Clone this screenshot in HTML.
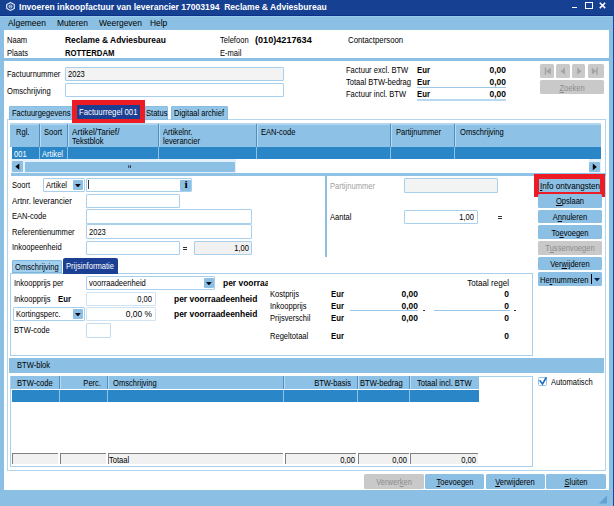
<!DOCTYPE html>
<html lang="nl"><head><meta charset="utf-8"><title>Invoeren inkoopfactuur</title><style>
html,body{margin:0;padding:0;background:#8bbfe3;}
#w{position:relative;width:614px;height:506px;overflow:hidden;font-family:"Liberation Sans",sans-serif;font-size:8.6px;color:#000;}
#w div,#w span,#w svg{position:absolute;}
#w span span{position:absolute;}
.t{white-space:nowrap;}
.tt{font-size:8.9px;}
.m{font-size:9.3px;}
u{text-decoration:underline;text-decoration-thickness:0.6px;text-underline-offset:0.5px;}
</style></head><body><div id="w">
<div style="left:0px;top:0px;width:614px;height:506px;background:#8bbfe3;"></div>
<div style="left:0px;top:0px;width:614px;height:15.5px;background:#164193;"></div>
<div style="left:0px;top:14.7px;width:614px;height:0.9px;background:#0d3289;"></div>
<div style="left:0px;top:15.6px;width:612.8px;height:1.8px;background:#99cbea;"></div>
<svg style="left:5.6px;top:1.7px" width="9" height="9" viewBox="0 0 10 10"><path d="M5 .6L9.2 2.9V7.1L5 9.4L.8 7.1V2.9Z" fill="none" stroke="#e6ecf8" stroke-width="1.25"/><circle cx="5" cy="5" r="1.7" fill="none" stroke="#e6ecf8" stroke-width=".9"/><path d="M3.6 5H6.4" stroke="#e6ecf8" stroke-width=".7"/></svg>
<span class="t tt" style="top:0.7999999999999998px;line-height:12px;left:18.5px;color:#fff;font-weight:bold;transform:scaleX(0.965);transform-origin:left center;">Invoeren inkoopfactuur van leverancier 17003194&nbsp; Reclame &amp; Adviesbureau</span>
<div style="left:572.3px;top:6.9px;width:5.2px;height:1.6px;background:#fff;"></div>
<div style="left:584.8px;top:2.2px;width:8.6px;height:6.6px;border:1.2px solid #fff;border-top-width:1.8px;box-sizing:border-box;"></div>
<svg style="left:599.4px;top:2.1px" width="7" height="6.8" viewBox="0 0 8 8"><path d="M.8 .8L7.2 7.2M7.2 .8L.8 7.2" stroke="#fff" stroke-width="1.7"/></svg>
<div style="left:612.8px;top:14.8px;width:1.2px;height:491.2px;background:#1f4598;"></div>
<span class="t m" style="top:17.1px;line-height:12px;left:8px;transform:scaleX(0.905);transform-origin:left center;">Algemeen</span>
<span class="t m" style="top:17.1px;line-height:12px;left:56.5px;transform:scaleX(0.905);transform-origin:left center;">Muteren</span>
<span class="t m" style="top:17.1px;line-height:12px;left:98.5px;transform:scaleX(0.905);transform-origin:left center;">Weergeven</span>
<span class="t m" style="top:17.1px;line-height:12px;left:150px;transform:scaleX(0.905);transform-origin:left center;">Help</span>
<div style="left:3.8px;top:30.4px;width:605.2px;height:28.1px;background:#fff;"></div>
<div style="left:3.8px;top:61.3px;width:605.2px;height:429.2px;background:#fff;"></div>
<span class="t" style="top:34.0px;line-height:12px;left:7px;transform:scaleX(0.88);transform-origin:left center;">Naam</span>
<span class="t" style="top:47.0px;line-height:12px;left:7px;transform:scaleX(0.88);transform-origin:left center;">Plaats</span>
<span class="t" style="top:34.0px;line-height:12px;left:65px;font-weight:bold;transform:scaleX(0.98);transform-origin:left center;">Reclame &amp; Adviesbureau</span>
<span class="t" style="top:47.0px;line-height:12px;left:65px;font-weight:bold;transform:scaleX(0.9);transform-origin:left center;">ROTTERDAM</span>
<span class="t" style="top:34.0px;line-height:12px;left:220px;transform:scaleX(0.88);transform-origin:left center;">Telefoon</span>
<span class="t" style="top:34.0px;line-height:12px;left:255px;font-weight:bold;transform:scaleX(1.06);transform-origin:left center;">(010)4217634</span>
<span class="t" style="top:47.0px;line-height:12px;left:220px;transform:scaleX(0.88);transform-origin:left center;">E-mail</span>
<span class="t" style="top:34.0px;line-height:12px;left:348px;transform:scaleX(0.91);transform-origin:left center;">Contactpersoon</span>
<span class="t" style="top:67.8px;line-height:12px;left:7px;transform:scaleX(0.88);transform-origin:left center;">Factuurnummer</span>
<span class="t" style="top:84.5px;line-height:12px;left:7px;transform:scaleX(0.88);transform-origin:left center;">Omschrijving</span>
<div style="left:64.5px;top:66.5px;width:219.0px;height:14.0px;background:#f3f3f3;border-radius:1.5px;box-shadow:inset 0 0 0 1px #a8cfeb;"></div>
<span class="t" style="top:67.8px;line-height:12px;left:68px;transform:scaleX(0.88);transform-origin:left center;">2023</span>
<div style="left:64.5px;top:82.5px;width:219.0px;height:14.0px;background:#fff;border-radius:1.5px;box-shadow:inset 0 0 0 1px #a8cfeb;"></div>
<span class="t" style="top:63.599999999999994px;line-height:12px;left:346px;transform:scaleX(0.88);transform-origin:left center;">Factuur excl. BTW</span>
<span class="t" style="top:63.599999999999994px;line-height:12px;left:417.3px;font-weight:bold;transform:scaleX(0.9);transform-origin:left center;">Eur</span>
<span class="t" style="top:63.599999999999994px;line-height:12px;left:206px;width:300px;text-align:right;font-weight:bold;transform:scaleX(0.98);transform-origin:right center;">0,00</span>
<span class="t" style="top:75.6px;line-height:12px;left:346px;transform:scaleX(0.88);transform-origin:left center;">Totaal BTW-bedrag</span>
<span class="t" style="top:75.6px;line-height:12px;left:417.3px;font-weight:bold;transform:scaleX(0.9);transform-origin:left center;">Eur</span>
<span class="t" style="top:75.6px;line-height:12px;left:206px;width:300px;text-align:right;font-weight:bold;transform:scaleX(0.98);transform-origin:right center;">0,00</span>
<span class="t" style="top:87.5px;line-height:12px;left:346px;transform:scaleX(0.88);transform-origin:left center;">Factuur incl. BTW</span>
<span class="t" style="top:87.5px;line-height:12px;left:417.3px;font-weight:bold;transform:scaleX(0.9);transform-origin:left center;">Eur</span>
<span class="t" style="top:87.5px;line-height:12px;left:206px;width:300px;text-align:right;font-weight:bold;transform:scaleX(0.98);transform-origin:right center;">0,00</span>
<div style="left:417px;top:86.7px;width:89px;height:0.8px;background:#9cc8e8;"></div>
<div style="left:417px;top:98.8px;width:89px;height:2px;background:#b7d8f0;"></div>
<div style="left:540.3px;top:64px;width:13.5px;height:13.7px;background:#c9c9c9;border-radius:1.5px;"></div>
<div style="left:556.2px;top:64px;width:13.5px;height:13.7px;background:#c9c9c9;border-radius:1.5px;"></div>
<div style="left:571.9px;top:64px;width:13.5px;height:13.7px;background:#c9c9c9;border-radius:1.5px;"></div>
<div style="left:587.5px;top:64px;width:16.2px;height:13.7px;background:#c9c9c9;border-radius:1.5px;"></div>
<svg style="left:0;top:0" width="614" height="100" viewBox="0 0 614 100"><path d="M550.7 67.60000000000001L546.3 71.2L550.7 74.8Z" fill="#a3a3a3"/><rect x="544.8" y="67.6" width="1.5" height="7.2" fill="#a3a3a3"/><path d="M565.0 67.60000000000001L560.5999999999999 71.2L565.0 74.8Z" fill="#a3a3a3"/><path d="M577.1999999999999 67.60000000000001L581.6 71.2L577.1999999999999 74.8Z" fill="#a3a3a3"/><path d="M591.8 67.60000000000001L596.2 71.2L591.8 74.8Z" fill="#a3a3a3"/><rect x="596.2" y="67.6" width="1.5" height="7.2" fill="#a3a3a3"/></svg>
<div style="left:540.3px;top:80.2px;width:63.60000000000002px;height:13.599999999999994px;background:#c9c9c9;border-radius:1.5px;"></div>
<span class="t" style="top:81.6px;line-height:12px;left:422.0999999999999px;width:300px;text-align:center;color:#8c8c8c;transform:scaleX(0.88);transform-origin:center center;"><u>Z</u>oeken</span>
<div style="left:7px;top:119.3px;width:599.2px;height:351.3px;border:1.2px solid #b3d5ee;box-sizing:border-box;"></div>
<div style="left:8.8px;top:106px;width:64.2px;height:13.599999999999994px;background:#93c5e8;border-radius:2px 2px 0 0;box-shadow:inset 0 0 0 0.8px #86badf;"></div>
<span class="t" style="top:107.1px;line-height:12px;left:12px;transform:scaleX(0.88);transform-origin:left center;">Factuurgegevens</span>
<div style="left:142px;top:106px;width:26px;height:13.599999999999994px;background:#93c5e8;border-radius:2px 2px 0 0;box-shadow:inset 0 0 0 0.8px #86badf;"></div>
<span class="t" style="top:107.1px;line-height:12px;left:145.5px;transform:scaleX(0.88);transform-origin:left center;">Status</span>
<div style="left:170.5px;top:106px;width:57.0px;height:13.599999999999994px;background:#93c5e8;border-radius:2px 2px 0 0;box-shadow:inset 0 0 0 0.8px #86badf;"></div>
<span class="t" style="top:107.1px;line-height:12px;left:173.5px;transform:scaleX(0.88);transform-origin:left center;">Digitaal archief</span>
<div style="left:72px;top:100px;width:73px;height:23.5px;background:#ed1c24;"></div>
<div style="left:77.2px;top:105px;width:62.6px;height:13.7px;background:#1b3f92;"></div>
<span class="t" style="top:106.1px;line-height:12px;left:79px;color:#fff;transform:scaleX(0.9);transform-origin:left center;">Factuurregel 001</span>
<div style="left:10.3px;top:123px;width:590.7px;height:24px;background:#8dc1e5;"></div>
<div style="left:10.3px;top:123px;width:590.7px;height:1.8px;background:#b3d6ef;"></div>
<div style="left:39.0px;top:124px;width:1px;height:23px;background:#4f8fc4;"></div>
<div style="left:40.0px;top:124px;width:0.6px;height:23px;background:#b9daf1;"></div>
<div style="left:67.0px;top:124px;width:1px;height:23px;background:#4f8fc4;"></div>
<div style="left:68.0px;top:124px;width:0.6px;height:23px;background:#b9daf1;"></div>
<div style="left:157.5px;top:124px;width:1px;height:23px;background:#4f8fc4;"></div>
<div style="left:158.5px;top:124px;width:0.6px;height:23px;background:#b9daf1;"></div>
<div style="left:255.5px;top:124px;width:1px;height:23px;background:#4f8fc4;"></div>
<div style="left:256.5px;top:124px;width:0.6px;height:23px;background:#b9daf1;"></div>
<div style="left:390.0px;top:124px;width:1px;height:23px;background:#4f8fc4;"></div>
<div style="left:391.0px;top:124px;width:0.6px;height:23px;background:#b9daf1;"></div>
<div style="left:454.0px;top:124px;width:1px;height:23px;background:#4f8fc4;"></div>
<div style="left:455.0px;top:124px;width:0.6px;height:23px;background:#b9daf1;"></div>
<span class="t" style="top:126.0px;line-height:12px;left:16px;transform:scaleX(0.88);transform-origin:left center;">Rgl.</span>
<span class="t" style="top:126.0px;line-height:12px;left:44px;transform:scaleX(0.88);transform-origin:left center;">Soort</span>
<span class="t" style="top:126.0px;line-height:12px;left:72px;transform:scaleX(0.955);transform-origin:left center;">Artikel/Tarief/</span>
<span class="t" style="top:135.0px;line-height:12px;left:72px;transform:scaleX(0.88);transform-origin:left center;">Tekstblok</span>
<span class="t" style="top:126.0px;line-height:12px;left:163px;transform:scaleX(0.88);transform-origin:left center;">Artikelnr.</span>
<span class="t" style="top:135.0px;line-height:12px;left:163px;transform:scaleX(0.88);transform-origin:left center;">leverancier</span>
<span class="t" style="top:126.0px;line-height:12px;left:261px;transform:scaleX(0.88);transform-origin:left center;">EAN-code</span>
<span class="t" style="top:126.0px;line-height:12px;left:395.5px;transform:scaleX(0.88);transform-origin:left center;">Partijnummer</span>
<span class="t" style="top:126.0px;line-height:12px;left:460px;transform:scaleX(0.88);transform-origin:left center;">Omschrijving</span>
<div style="left:11.5px;top:147px;width:589.3px;height:12.2px;background:#2a86c6;"></div>
<div style="left:39.2px;top:147px;width:0.8px;height:12.2px;background:#8cc0e4;"></div>
<div style="left:67.2px;top:147px;width:0.8px;height:12.2px;background:#8cc0e4;"></div>
<div style="left:157.7px;top:147px;width:0.8px;height:12.2px;background:#8cc0e4;"></div>
<div style="left:255.7px;top:147px;width:0.8px;height:12.2px;background:#8cc0e4;"></div>
<div style="left:390.2px;top:147px;width:0.8px;height:12.2px;background:#8cc0e4;"></div>
<div style="left:454.2px;top:147px;width:0.8px;height:12.2px;background:#8cc0e4;"></div>
<span class="t" style="top:147.9px;line-height:12px;left:13.5px;color:#fff;transform:scaleX(0.88);transform-origin:left center;">001</span>
<span class="t" style="top:147.9px;line-height:12px;left:41.5px;color:#fff;transform:scaleX(0.88);transform-origin:left center;">Artikel</span>
<div style="left:10.5px;top:159.3px;width:590.5px;height:14.2px;background:#e4f0f9;"></div>
<div style="left:12.2px;top:161.2px;width:10.8px;height:10.8px;background:#8bbfe3;border-radius:1px;"></div>
<div style="left:25px;top:161.5px;width:210px;height:10.3px;background:#8bbfe3;border-radius:1px;"></div>
<div style="left:235.5px;top:159.3px;width:353px;height:14.2px;background:#fff;"></div>
<div style="left:589.2px;top:162.2px;width:10.8px;height:9.5px;background:#8bbfe3;border-radius:1px;"></div>
<svg style="left:0;top:150px" width="614" height="30" viewBox="0 150 614 30"><path d="M19.3 163.5L15.3 166.6L19.3 169.7Z" fill="#000"/><path d="M592.8 163.6L596.8 166.9L592.8 170.2Z" fill="#000"/><rect x="128.3" y="165.3" width="0.9" height="2.6" fill="#223"/><rect x="130" y="165.3" width="0.9" height="2.6" fill="#223"/></svg>
<div style="left:10.5px;top:173.3px;width:595px;height:2.7px;background:#8fc2e5;"></div>
<span class="t" style="top:179.0px;line-height:12px;left:12px;transform:scaleX(0.88);transform-origin:left center;">Soort</span>
<div style="left:43px;top:178px;width:41.5px;height:14px;background:#fff;border-radius:1.5px;box-shadow:inset 0 0 0 1px #a8cfeb;"></div>
<span class="t" style="top:179.2px;line-height:12px;left:46.3px;transform:scaleX(0.88);transform-origin:left center;">Artikel</span>
<div style="left:73px;top:180px;width:10px;height:10px;background:#8bbfe3;border-radius:1px;"></div>
<svg style="left:75.1px;top:183.6px" width="5.8" height="3.8" viewBox="0 0 6 4"><path d="M0 0H6L3 3.8Z" fill="#0a0a18"/></svg>
<div style="left:86px;top:178px;width:106.30000000000001px;height:14px;background:#fff;border-radius:1.5px;box-shadow:inset 0 0 0 1px #a8cfeb;"></div>
<div style="left:88.3px;top:180.4px;width:1.2px;height:8.8px;background:#3a3a3a;"></div>
<div style="left:180px;top:180px;width:11.2px;height:10.5px;background:#8bbfe3;border-radius:1px;"></div>
<span class="t" style="top:179.0px;line-height:12px;left:35.599999999999994px;width:300px;text-align:center;font-weight:bold;transform:scaleX(1.1);transform-origin:center center;font-family:'Liberation Serif',serif;font-size:10.5px;">i</span>
<span class="t" style="top:194.9px;line-height:12px;left:12px;transform:scaleX(0.92);transform-origin:left center;">Artnr. leverancier</span>
<div style="left:86px;top:193.7px;width:93.5px;height:14.300000000000011px;background:#fff;border-radius:1.5px;box-shadow:inset 0 0 0 1px #a8cfeb;"></div>
<span class="t" style="top:210.0px;line-height:12px;left:12px;transform:scaleX(0.88);transform-origin:left center;">EAN-code</span>
<div style="left:86px;top:209px;width:166.3px;height:14.599999999999994px;background:#fff;border-radius:1.5px;box-shadow:inset 0 0 0 1px #a8cfeb;"></div>
<span class="t" style="top:225.9px;line-height:12px;left:12px;transform:scaleX(0.88);transform-origin:left center;">Referentienummer</span>
<div style="left:86px;top:224.3px;width:166.3px;height:15.199999999999989px;background:#fff;border-radius:1.5px;box-shadow:inset 0 0 0 1px #a8cfeb;"></div>
<span class="t" style="top:226.0px;line-height:12px;left:89px;transform:scaleX(0.88);transform-origin:left center;">2023</span>
<span class="t" style="top:241.3px;line-height:12px;left:12px;transform:scaleX(0.88);transform-origin:left center;">Inkoopeenheid</span>
<div style="left:86px;top:240.8px;width:93.5px;height:14.399999999999977px;background:#fff;border-radius:1.5px;box-shadow:inset 0 0 0 1px #a8cfeb;"></div>
<div style="left:183px;top:246.6px;width:4.4px;height:1px;background:#333;"></div>
<div style="left:183px;top:248.5px;width:4.4px;height:1px;background:#333;"></div>
<div style="left:194px;top:240.8px;width:58.30000000000001px;height:14.399999999999977px;background:#f1f1f1;border-radius:1.5px;box-shadow:inset 0 0 0 1px #a8cfeb;"></div>
<span class="t" style="top:241.6px;line-height:12px;left:-50.69999999999999px;width:300px;text-align:right;transform:scaleX(0.88);transform-origin:right center;">1,00</span>
<div style="left:324.8px;top:175px;width:2.6px;height:82px;background:#8bbfe3;"></div>
<span class="t" style="top:179.8px;line-height:12px;left:330px;color:#a0a0a0;transform:scaleX(0.88);transform-origin:left center;">Partijnummer</span>
<div style="left:404px;top:178.1px;width:94.30000000000001px;height:14.5px;background:#f2f3f3;border-radius:1.5px;box-shadow:inset 0 0 0 1px #a8cfeb;"></div>
<span class="t" style="top:210.8px;line-height:12px;left:330px;transform:scaleX(0.88);transform-origin:left center;">Aantal</span>
<div style="left:404px;top:209.5px;width:73.5px;height:14.800000000000011px;background:#fff;border-radius:1.5px;box-shadow:inset 0 0 0 1px #a8cfeb;"></div>
<span class="t" style="top:210.8px;line-height:12px;left:174.10000000000002px;width:300px;text-align:right;transform:scaleX(0.88);transform-origin:right center;">1,00</span>
<div style="left:497.8px;top:215.7px;width:4.4px;height:1px;background:#333;"></div>
<div style="left:497.8px;top:217.6px;width:4.4px;height:1px;background:#333;"></div>
<div style="left:534px;top:174.1px;width:70.8px;height:22.6px;background:#ed1c24;"></div>
<div style="left:538.7px;top:179.1px;width:61.4px;height:12.7px;background:#8bbfe3;"></div>
<span class="t" style="top:179.5px;line-height:12px;left:539.5px;transform:scaleX(0.945);transform-origin:left center;"><u>I</u>nfo ontvangsten</span>
<div style="left:537.5px;top:193.95000000000002px;width:64.0px;height:13.699999999999989px;background:#8bbfe3;border-radius:1.5px;"></div>
<span class="t" style="top:195.4px;line-height:12px;left:419.5px;width:300px;text-align:center;transform:scaleX(0.88);transform-origin:center center;"><u>O</u>pslaan</span>
<div style="left:537.5px;top:209.60000000000002px;width:64.0px;height:13.699999999999989px;background:#8bbfe3;border-radius:1.5px;"></div>
<span class="t" style="top:211.05px;line-height:12px;left:419.5px;width:300px;text-align:center;transform:scaleX(0.88);transform-origin:center center;">A<u>n</u>nuleren</span>
<div style="left:537.5px;top:225.25px;width:64.0px;height:13.699999999999989px;background:#8bbfe3;border-radius:1.5px;"></div>
<span class="t" style="top:226.7px;line-height:12px;left:419.5px;width:300px;text-align:center;transform:scaleX(0.88);transform-origin:center center;">To<u>e</u>voegen</span>
<div style="left:537.5px;top:240.9px;width:64.0px;height:13.699999999999989px;background:#c9c9c9;border-radius:1.5px;"></div>
<span class="t" style="top:242.35px;line-height:12px;left:419.5px;width:300px;text-align:center;color:#8c8c8c;transform:scaleX(0.88);transform-origin:center center;">T<u>u</u>ssenvoegen</span>
<div style="left:537.5px;top:256.55px;width:64.0px;height:13.699999999999989px;background:#8bbfe3;border-radius:1.5px;"></div>
<span class="t" style="top:258.0px;line-height:12px;left:419.5px;width:300px;text-align:center;transform:scaleX(0.88);transform-origin:center center;">Ver<u>w</u>ijderen</span>
<div style="left:537.5px;top:272.20000000000005px;width:64px;height:13.7px;background:#8bbfe3;border-radius:1.5px;"></div>
<span class="t" style="top:273.6px;line-height:12px;left:540px;transform:scaleX(0.88);transform-origin:left center;">He<u>r</u>nummeren</span>
<div style="left:590.8px;top:274.20000000000005px;width:0.9px;height:10px;background:#000;"></div>
<svg style="left:594px;top:277.50000000000006px" width="6" height="4" viewBox="0 0 6 4"><path d="M0 0H6L3 3.6Z" fill="#10204a"/></svg>
<div style="left:10.3px;top:273px;width:522.8px;height:82.7px;border:1px solid #a8cfeb;box-sizing:border-box;"></div>
<div style="left:12px;top:260px;width:49.5px;height:13.3px;background:#a3cfee;border-radius:2px 2px 0 0;box-shadow:inset 0 0 0 1px #7fb6de;"></div>
<span class="t" style="top:261.0px;line-height:12px;left:15px;transform:scaleX(0.88);transform-origin:left center;">Omschrijving</span>
<div style="left:63px;top:258px;width:54.5px;height:15.5px;background:#1b3f92;border-radius:2px 2px 0 0;"></div>
<span class="t" style="top:260.3px;line-height:12px;left:65.5px;color:#fff;transform:scaleX(0.88);transform-origin:left center;">Prijsinformatie</span>
<span class="t" style="top:277.0px;line-height:12px;left:14px;transform:scaleX(0.88);transform-origin:left center;">Inkoopprijs per</span>
<div style="left:86px;top:276px;width:129px;height:14px;background:#fff;border-radius:1.5px;box-shadow:inset 0 0 0 1px #a8cfeb;"></div>
<span class="t" style="top:277.0px;line-height:12px;left:89px;transform:scaleX(0.88);transform-origin:left center;">voorraadeenheid</span>
<div style="left:204px;top:277.7px;width:10px;height:10.800000000000011px;background:#8bbfe3;border-radius:1px;"></div>
<svg style="left:206.1px;top:281.70000000000005px" width="5.8" height="3.8" viewBox="0 0 6 4"><path d="M0 0H6L3 3.8Z" fill="#0a0a18"/></svg>
<div style="left:222px;top:277px;width:46px;height:12px;overflow:hidden;"><span class="t" style="left:1px;top:0;line-height:12px;font-weight:bold;transform:scaleX(0.98);transform-origin:left center;">per voorraadeenheid</span></div>
<span class="t" style="top:292.5px;line-height:12px;left:14px;transform:scaleX(0.88);transform-origin:left center;">Inkoopprijs</span>
<span class="t" style="top:292.8px;line-height:12px;left:57.5px;font-weight:bold;transform:scaleX(0.9);transform-origin:left center;">Eur</span>
<div style="left:86px;top:292.3px;width:70px;height:13.399999999999977px;background:#fff;border-radius:1.5px;box-shadow:inset 0 0 0 1px #cfe3f3;"></div>
<span class="t" style="top:292.7px;line-height:12px;left:-148px;width:300px;text-align:right;transform:scaleX(0.88);transform-origin:right center;">0,00</span>
<span class="t" style="top:292.5px;line-height:12px;left:174px;font-weight:bold;transform:scaleX(0.98);transform-origin:left center;">per voorraadeenheid</span>
<div style="left:13px;top:307px;width:71.5px;height:14px;background:#fff;border-radius:1.5px;box-shadow:inset 0 0 0 1px #a8cfeb;"></div>
<span class="t" style="top:308.2px;line-height:12px;left:16px;transform:scaleX(0.88);transform-origin:left center;">Kortingsperc.</span>
<div style="left:73px;top:309px;width:10px;height:10px;background:#8bbfe3;border-radius:1px;"></div>
<svg style="left:75.1px;top:312.6px" width="5.8" height="3.8" viewBox="0 0 6 4"><path d="M0 0H6L3 3.8Z" fill="#0a0a18"/></svg>
<div style="left:86px;top:307px;width:70px;height:13.5px;background:#fff;border-radius:1.5px;box-shadow:inset 0 0 0 1px #cfe3f3;"></div>
<span class="t" style="top:308.2px;line-height:12px;left:-148px;width:300px;text-align:right;transform:scaleX(0.98);transform-origin:right center;">0,00 %</span>
<span class="t" style="top:308.2px;line-height:12px;left:174px;font-weight:bold;transform:scaleX(0.98);transform-origin:left center;">per voorraadeenheid</span>
<span class="t" style="top:324.2px;line-height:12px;left:14px;transform:scaleX(0.88);transform-origin:left center;">BTW-code</span>
<div style="left:86px;top:323px;width:25px;height:14.5px;background:#fff;border-radius:1.5px;box-shadow:inset 0 0 0 1px #c3dcf0;"></div>
<span class="t" style="top:288.0px;line-height:12px;left:269.7px;transform:scaleX(0.88);transform-origin:left center;">Kostprijs</span>
<span class="t" style="top:288.0px;line-height:12px;left:331.2px;font-weight:bold;transform:scaleX(0.9);transform-origin:left center;">Eur</span>
<span class="t" style="top:288.0px;line-height:12px;left:209px;width:300px;text-align:right;font-weight:bold;transform:scaleX(0.98);transform-origin:right center;">0</span>
<span class="t" style="top:300.0px;line-height:12px;left:269.7px;transform:scaleX(0.88);transform-origin:left center;">Inkoopprijs</span>
<span class="t" style="top:300.0px;line-height:12px;left:331.2px;font-weight:bold;transform:scaleX(0.9);transform-origin:left center;">Eur</span>
<span class="t" style="top:300.0px;line-height:12px;left:209px;width:300px;text-align:right;font-weight:bold;transform:scaleX(0.98);transform-origin:right center;">0</span>
<span class="t" style="top:312.2px;line-height:12px;left:269.7px;transform:scaleX(0.88);transform-origin:left center;">Prijsverschil</span>
<span class="t" style="top:312.2px;line-height:12px;left:331.2px;font-weight:bold;transform:scaleX(0.9);transform-origin:left center;">Eur</span>
<span class="t" style="top:312.2px;line-height:12px;left:209px;width:300px;text-align:right;font-weight:bold;transform:scaleX(0.98);transform-origin:right center;">0</span>
<span class="t" style="top:330.0px;line-height:12px;left:269.7px;transform:scaleX(0.88);transform-origin:left center;">Regeltotaal</span>
<span class="t" style="top:330.0px;line-height:12px;left:331.2px;font-weight:bold;transform:scaleX(0.9);transform-origin:left center;">Eur</span>
<span class="t" style="top:330.0px;line-height:12px;left:209px;width:300px;text-align:right;font-weight:bold;transform:scaleX(0.98);transform-origin:right center;">0</span>
<span class="t" style="top:288.0px;line-height:12px;left:117.60000000000002px;width:300px;text-align:right;font-weight:bold;transform:scaleX(0.98);transform-origin:right center;">0,00</span>
<span class="t" style="top:300.0px;line-height:12px;left:117.60000000000002px;width:300px;text-align:right;font-weight:bold;transform:scaleX(0.98);transform-origin:right center;">0,00</span>
<span class="t" style="top:312.2px;line-height:12px;left:117.60000000000002px;width:300px;text-align:right;font-weight:bold;transform:scaleX(0.98);transform-origin:right center;">0,00</span>
<span class="t" style="top:277.0px;line-height:12px;left:209px;width:300px;text-align:right;transform:scaleX(0.94);transform-origin:right center;">Totaal regel</span>
<div style="left:349.5px;top:309.8px;width:68.5px;height:0.8px;background:#9cc8e8;"></div>
<div style="left:433.5px;top:309.8px;width:76px;height:0.8px;background:#9cc8e8;"></div>
<div style="left:422.5px;top:310.3px;width:2px;height:1px;background:#333;"></div>
<div style="left:514px;top:310.3px;width:2px;height:1px;background:#333;"></div>
<div style="left:9.3px;top:358px;width:595px;height:15.2px;background:#8bbfe3;"></div>
<span class="t" style="top:359.3px;line-height:12px;left:16.8px;transform:scaleX(0.88);transform-origin:left center;">BTW-blok</span>
<div style="left:10.3px;top:375.6px;width:522.7px;height:91px;border:1px solid #a8cfeb;box-sizing:border-box;"></div>
<div style="left:11.3px;top:375.8px;width:467.3px;height:13.7px;background:#8dc1e5;"></div>
<div style="left:58.5px;top:376.3px;width:1px;height:13.2px;background:#4f8fc4;"></div>
<div style="left:59.5px;top:376.3px;width:0.6px;height:13.2px;background:#b9daf1;"></div>
<div style="left:106.5px;top:376.3px;width:1px;height:13.2px;background:#4f8fc4;"></div>
<div style="left:107.5px;top:376.3px;width:0.6px;height:13.2px;background:#b9daf1;"></div>
<div style="left:283.2px;top:376.3px;width:1px;height:13.2px;background:#4f8fc4;"></div>
<div style="left:284.2px;top:376.3px;width:0.6px;height:13.2px;background:#b9daf1;"></div>
<div style="left:356.7px;top:376.3px;width:1px;height:13.2px;background:#4f8fc4;"></div>
<div style="left:357.7px;top:376.3px;width:0.6px;height:13.2px;background:#b9daf1;"></div>
<div style="left:408.8px;top:376.3px;width:1px;height:13.2px;background:#4f8fc4;"></div>
<div style="left:409.8px;top:376.3px;width:0.6px;height:13.2px;background:#b9daf1;"></div>
<span class="t" style="top:376.6px;line-height:12px;left:17px;transform:scaleX(0.88);transform-origin:left center;">BTW-code</span>
<span class="t" style="top:376.6px;line-height:12px;left:-199.5px;width:300px;text-align:right;transform:scaleX(0.88);transform-origin:right center;">Perc.</span>
<span class="t" style="top:376.6px;line-height:12px;left:113px;transform:scaleX(0.88);transform-origin:left center;">Omschrijving</span>
<span class="t" style="top:376.6px;line-height:12px;left:50.5px;width:300px;text-align:right;transform:scaleX(0.88);transform-origin:right center;">BTW-basis</span>
<span class="t" style="top:376.6px;line-height:12px;left:360px;transform:scaleX(0.88);transform-origin:left center;">BTW-bedrag</span>
<span class="t" style="top:376.6px;line-height:12px;left:417px;transform:scaleX(0.88);transform-origin:left center;">Totaal incl. BTW</span>
<div style="left:11.8px;top:389.5px;width:466.8px;height:12.1px;background:#2a86c6;"></div>
<div style="left:58.7px;top:389.5px;width:0.8px;height:12.1px;background:#8cc0e4;"></div>
<div style="left:106.7px;top:389.5px;width:0.8px;height:12.1px;background:#8cc0e4;"></div>
<div style="left:283.4px;top:389.5px;width:0.8px;height:12.1px;background:#8cc0e4;"></div>
<div style="left:356.9px;top:389.5px;width:0.8px;height:12.1px;background:#8cc0e4;"></div>
<div style="left:409.0px;top:389.5px;width:0.8px;height:12.1px;background:#8cc0e4;"></div>
<div style="left:12px;top:452.8px;width:46.3px;height:11.2px;background:#f1f1f1;border-top:1.5px solid #7f7f7f;border-left:1.5px solid #7f7f7f;box-sizing:border-box;"></div>
<div style="left:60px;top:452.8px;width:46.3px;height:11.2px;background:#f1f1f1;border-top:1.5px solid #7f7f7f;border-left:1.5px solid #7f7f7f;box-sizing:border-box;"></div>
<div style="left:108px;top:452.8px;width:175px;height:11.2px;background:#f1f1f1;border-top:1.5px solid #7f7f7f;border-left:1.5px solid #7f7f7f;box-sizing:border-box;"></div>
<div style="left:284.7px;top:452.8px;width:71.80000000000001px;height:11.2px;background:#f1f1f1;border-top:1.5px solid #7f7f7f;border-left:1.5px solid #7f7f7f;box-sizing:border-box;"></div>
<div style="left:358.2px;top:452.8px;width:50.400000000000034px;height:11.2px;background:#f1f1f1;border-top:1.5px solid #7f7f7f;border-left:1.5px solid #7f7f7f;box-sizing:border-box;"></div>
<div style="left:410.3px;top:452.8px;width:68.19999999999999px;height:11.2px;background:#f1f1f1;border-top:1.5px solid #7f7f7f;border-left:1.5px solid #7f7f7f;box-sizing:border-box;"></div>
<span class="t" style="top:453.5px;line-height:12px;left:109px;transform:scaleX(0.88);transform-origin:left center;">Totaal</span>
<span class="t" style="top:453.6px;line-height:12px;left:54.60000000000002px;width:300px;text-align:right;transform:scaleX(0.88);transform-origin:right center;">0,00</span>
<span class="t" style="top:453.6px;line-height:12px;left:106.69999999999999px;width:300px;text-align:right;transform:scaleX(0.88);transform-origin:right center;">0,00</span>
<span class="t" style="top:453.6px;line-height:12px;left:176.3px;width:300px;text-align:right;transform:scaleX(0.88);transform-origin:right center;">0,00</span>
<div style="left:538.2px;top:376.5px;width:9.3px;height:9.3px;background:#fff;border:1px solid #93c1e8;border-radius:1.5px;box-sizing:border-box;"></div>
<svg style="left:538px;top:376px" width="10" height="10" viewBox="0 0 10 10"><path d="M1.6 4.3L4.5 8L8.4 1.3" fill="none" stroke="#2372c3" stroke-width="1.7"/></svg>
<span class="t" style="top:375.8px;line-height:12px;left:551.2px;transform:scaleX(0.88);transform-origin:left center;">Automatisch</span>
<div style="left:364.3px;top:474px;width:59.39999999999998px;height:14.5px;background:#c9c9c9;border-radius:1.5px;"></div>
<span class="t" style="top:475.85px;line-height:12px;left:244.0px;width:300px;text-align:center;color:#8c8c8c;transform:scaleX(0.88);transform-origin:center center;">Verwer<u>k</u>en</span>
<div style="left:425.4px;top:474px;width:58.80000000000001px;height:14.5px;background:#8bbfe3;border-radius:1.5px;"></div>
<span class="t" style="top:475.85px;line-height:12px;left:304.79999999999995px;width:300px;text-align:center;transform:scaleX(0.88);transform-origin:center center;"><u>T</u>oevoegen</span>
<div style="left:485.8px;top:474px;width:58.99999999999994px;height:14.5px;background:#8bbfe3;border-radius:1.5px;"></div>
<span class="t" style="top:475.85px;line-height:12px;left:365.29999999999995px;width:300px;text-align:center;transform:scaleX(0.88);transform-origin:center center;"><u>V</u>erwijderen</span>
<div style="left:546.4px;top:474px;width:59.60000000000002px;height:14.5px;background:#8bbfe3;border-radius:1.5px;"></div>
<span class="t" style="top:475.85px;line-height:12px;left:426.20000000000005px;width:300px;text-align:center;transform:scaleX(0.88);transform-origin:center center;"><u>S</u>luiten</span>
<svg style="left:598px;top:495px" width="10" height="9" viewBox="0 0 10 9"><path d="M9 .6V8.5H1Z" fill="#63a0d6"/></svg>
</div></body></html>
